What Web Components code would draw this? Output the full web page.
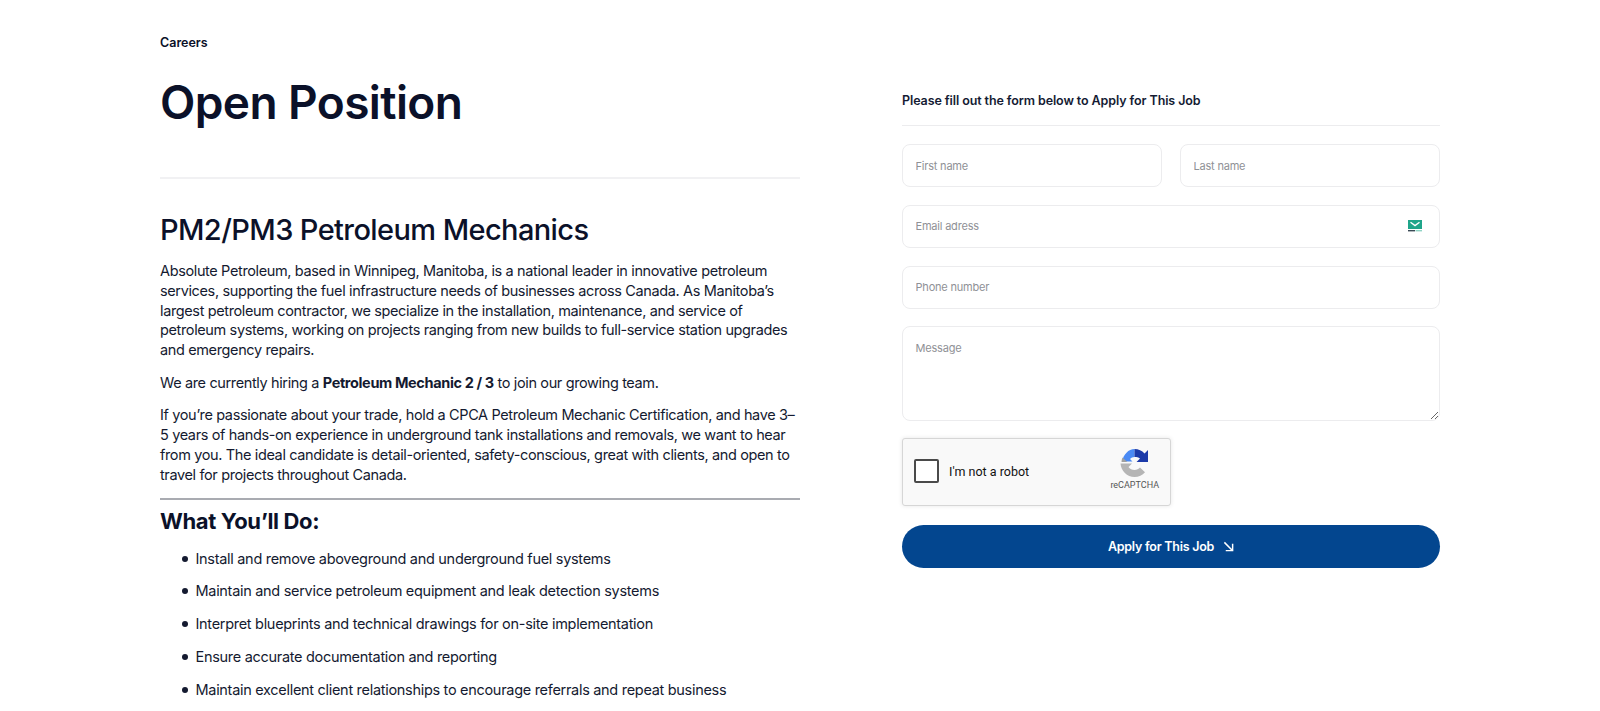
<!DOCTYPE html>
<html lang="en">
<head>
<meta charset="utf-8">
<title>Open Position</title>
<style>
    html, body { margin: 0; background: #fff; overflow: hidden; }
    body { font-family: Inter, "Noto Sans", sans-serif; color: #0b1129; }
</style>
</head>
<body>
<careers-page>
    <job-post slot="left">
        <p>Absolute Petroleum, based in Winnipeg, Manitoba, is a national leader in innovative petroleum services, supporting the fuel infrastructure needs of businesses across Canada. As Manitoba’s largest petroleum contractor, we specialize in the installation, maintenance, and service of petroleum systems, working on projects ranging from new builds to full-service station upgrades and emergency repairs.</p>
        <p>We are currently hiring a <strong>Petroleum Mechanic 2 / 3</strong> to join our growing team.</p>
        <p>If you’re passionate about your trade, hold a CPCA Petroleum Mechanic Certification, and have 3–5 years of hands-on experience in underground tank installations and removals, we want to hear from you. The ideal candidate is detail-oriented, safety-conscious, great with clients, and open to travel for projects throughout Canada.</p>
    </job-post>
    <apply-form slot="right"></apply-form>
</careers-page>

<script>
class CareersPage extends HTMLElement {
    connectedCallback() {
        this.attachShadow({ mode: 'open' });
        this.shadowRoot.innerHTML = `
            <style>
                :host {
                    display: grid;
                    grid-template-columns: 640px 538px;
                    column-gap: 102px;
                    width: 1280px;
                    margin: 0 auto;
                    padding-top: 34px;
                }
                .right { padding-top: 58px; }
            </style>
            <div><slot name="left"></slot></div>
            <div class="right"><slot name="right"></slot></div>
        `;
    }
}

class JobPost extends HTMLElement {
    connectedCallback() {
        this.attachShadow({ mode: 'open' });
        this.shadowRoot.innerHTML = `
            <style>
                :host {
                    display: block;
                    font-family: Inter, "Noto Sans", sans-serif;
                    color: #141a30;
                    font-size: 14.5px;
                    letter-spacing: -0.37px;
                }
                .crumb { font-size: 12.5px; font-weight: 600; line-height: 18px; letter-spacing: 0; color: #0b1129; }
                h1 { margin: 20px 0 0; font-size: 46px; font-weight: 600; line-height: 60px; letter-spacing: -0.6px; color: #0b1129; }
                .rule { height: 2px; background: #f1f1f3; margin: 45px 0 0; }
                h2 { margin: 31px 0 0; font-size: 29px; font-weight: 500; line-height: 40px; letter-spacing: -0.6px; color: #0b1129; }
                .body { margin-top: 11px; }
                ::slotted(p) { margin: 0 0 12.85px; line-height: 19.8px; }
                ::slotted(p:last-child) { margin-bottom: 0; }
                hr { border: 0; height: 2px; background: #a9abb1; margin: 13px 0 0; }
                h3 { margin: 6px 0 0; font-size: 22px; font-weight: 700; line-height: 30px; letter-spacing: -0.35px; color: #0b1129; }
                ul { margin: 13px 0 0; padding: 0 0 0 35.500px; list-style: none; letter-spacing: -0.3px; }
                li { position: relative; line-height: 20px; margin-bottom: 12.8px; }
                li::before {
                    content: "";
                    position: absolute;
                    left: -14px;
                    top: 7px;
                    width: 6px;
                    height: 6px;
                    border-radius: 50%;
                    background: #141a30;
                }
            </style>
            <div class="crumb">Careers</div>
            <h1>Open Position</h1>
            <div class="rule"></div>
            <h2>PM2/PM3 Petroleum Mechanics</h2>
            <div class="body"><slot></slot></div>
            <hr>
            <h3>What You’ll Do:</h3>
            <ul>
                <li>Install and remove aboveground and underground fuel systems</li>
                <li>Maintain and service petroleum equipment and leak detection systems</li>
                <li>Interpret blueprints and technical drawings for on-site implementation</li>
                <li>Ensure accurate documentation and reporting</li>
                <li>Maintain excellent client relationships to encourage referrals and repeat business</li>
            </ul>
        `;
    }
}

class ApplyForm extends HTMLElement {
    connectedCallback() {
        this.attachShadow({ mode: 'open' });
        this.shadowRoot.innerHTML = `
            <style>
                :host { display: block; font-family: Inter, "Noto Sans", sans-serif; }
                .title {
                    font-size: 12.5px;
                    font-weight: 600;
                    letter-spacing: -0.1px;
                    line-height: 17px;
                    color: #141b33;
                    padding-bottom: 16px;
                    border-bottom: 1px solid #ececee;
                    margin-bottom: 18px;
                }
                form { display: grid; grid-template-columns: 1fr 1fr; gap: 17.8px 18px; }
                .wide { grid-column: 1 / -1; }
                .field { position: relative; display: block; }
                input, textarea {
                    display: block;
                    width: 100%;
                    box-sizing: border-box;
                    height: 43px;
                    padding: 0 12.500px;
                    border: 1px solid #ececee;
                    border-radius: 8px;
                    font: 400 11px Inter, "Noto Sans", sans-serif;
                    letter-spacing: -0.2px;
                    background: #fff;
                    outline: none;
                }
                textarea { height: 95px; padding-top: 14px; resize: vertical; }
                ::placeholder { color: #8f9196; opacity: 1; }
                .mail { position: absolute; right: 18px; top: 15px; width: 14px; height: 13px; }
                captcha-box { margin-top: -1px; }
                button {
                    grid-column: 1 / -1;
                    display: flex;
                    align-items: center;
                    justify-content: center;
                    gap: 10px;
                    height: 43px;
                    margin-top: 1px;
                    border: 0;
                    border-radius: 22px;
                    background: #03468f;
                    color: #fff;
                    font: 600 12.5px Inter, "Noto Sans", sans-serif;
                    letter-spacing: -0.25px;
                }
                button svg { width: 11px; height: 11px; margin-left: -1px; }
            </style>
            <div class="title">Please fill out the form below to Apply for This Job</div>
            <form>
                <label class="field"><input placeholder="First name"></label>
                <label class="field"><input placeholder="Last name"></label>
                <label class="field wide">
                    <input placeholder="Email adress">
                    <svg class="mail" viewBox="0 0 14 13">
                        <rect width="14" height="9" fill="#1fa58a"/>
                        <path d="M2.500 2.200 7 5.600l4.500-3.400" fill="none" stroke="#fff" stroke-width="1.4"/>
                        <rect y="10" width="7" height="1.400" fill="#3a4a55"/>
                        <rect x="7.500" y="10" width="6.500" height="1.400" fill="#8fd3c4"/>
                    </svg>
                </label>
                <label class="field wide"><input placeholder="Phone number"></label>
                <label class="field wide"><textarea placeholder="Message"></textarea></label>
                <captcha-box class="wide"></captcha-box>
                <button type="button">Apply for This Job
                    <svg viewBox="0 0 12 12" fill="none" stroke="#fff" stroke-width="1.6"><path d="M1.500 1.500l8.500 8.500M10.500 3v7.500H3"/></svg>
                </button>
            </form>
        `;
    }
}

class CaptchaBox extends HTMLElement {
    connectedCallback() {
        this.attachShadow({ mode: 'open' });
        this.shadowRoot.innerHTML = `
            <style>
                :host {
                    display: flex;
                    align-items: center;
                    box-sizing: border-box;
                    width: 269px;
                    height: 68px;
                    padding: 0 11px 2px 11px;
                    background: #f9f9f9;
                    border: 1px solid #d6d6d6;
                    border-radius: 3px;
                    box-shadow: 0 0 4px rgba(0, 0, 0, 0.1);
                    font-family: Roboto, "Liberation Sans", sans-serif;
                    color: #111;
                }
                .check {
                    width: 24.500px;
                    height: 24.500px;
                    box-sizing: border-box;
                    border: 2px solid #4a4a4a;
                    border-radius: 2px;
                    background: #fff;
                }
                .label { margin-left: 10.500px; font-size: 12.500px; flex: 1; }
                .logo { display: flex; flex-direction: column; align-items: center; gap: 3px; margin-top: -3px; }
                .logo svg { width: 29px; height: 28px; }
                .logo span { font-size: 9px; color: #555; }
            </style>
            <div class="check"></div>
            <div class="label">I'm not a robot</div>
            <div class="logo">
                <svg viewBox="0 0 28 28">
                    <path d="M14 0v8c-1.800 0-3.400.8-4.500 2L12 12.500H1.500C3 5.500 8 0 14 0z" fill="#4a8af4"/>
                    <path d="M14 0c4 0 7.500 1.700 10 4.500L27.500 1v12H16l3.500-3.500C18 8.300 16.200 8 14 8z" fill="#1c3aa9"/>
                    <path d="M0 14.500h11.500L8 18c1.300 1.800 3.500 3 6 3 2.200 0 4.200-1 5.500-2.500l5 4.800C22 26.200 18.200 28 14 28 6.500 28 .5 22 0 14.500z" fill="#b5b5b5"/>
                    <path d="M1 13c0-1.500.3-3 1-4.500l4.800 4.500z" fill="#a0a0a0"/>
                </svg>
                <span>reCAPTCHA</span>
            </div>
        `;
    }
}

customElements.define('careers-page', CareersPage);
customElements.define('job-post', JobPost);
customElements.define('apply-form', ApplyForm);
customElements.define('captcha-box', CaptchaBox);
</script>
</body>
</html>
